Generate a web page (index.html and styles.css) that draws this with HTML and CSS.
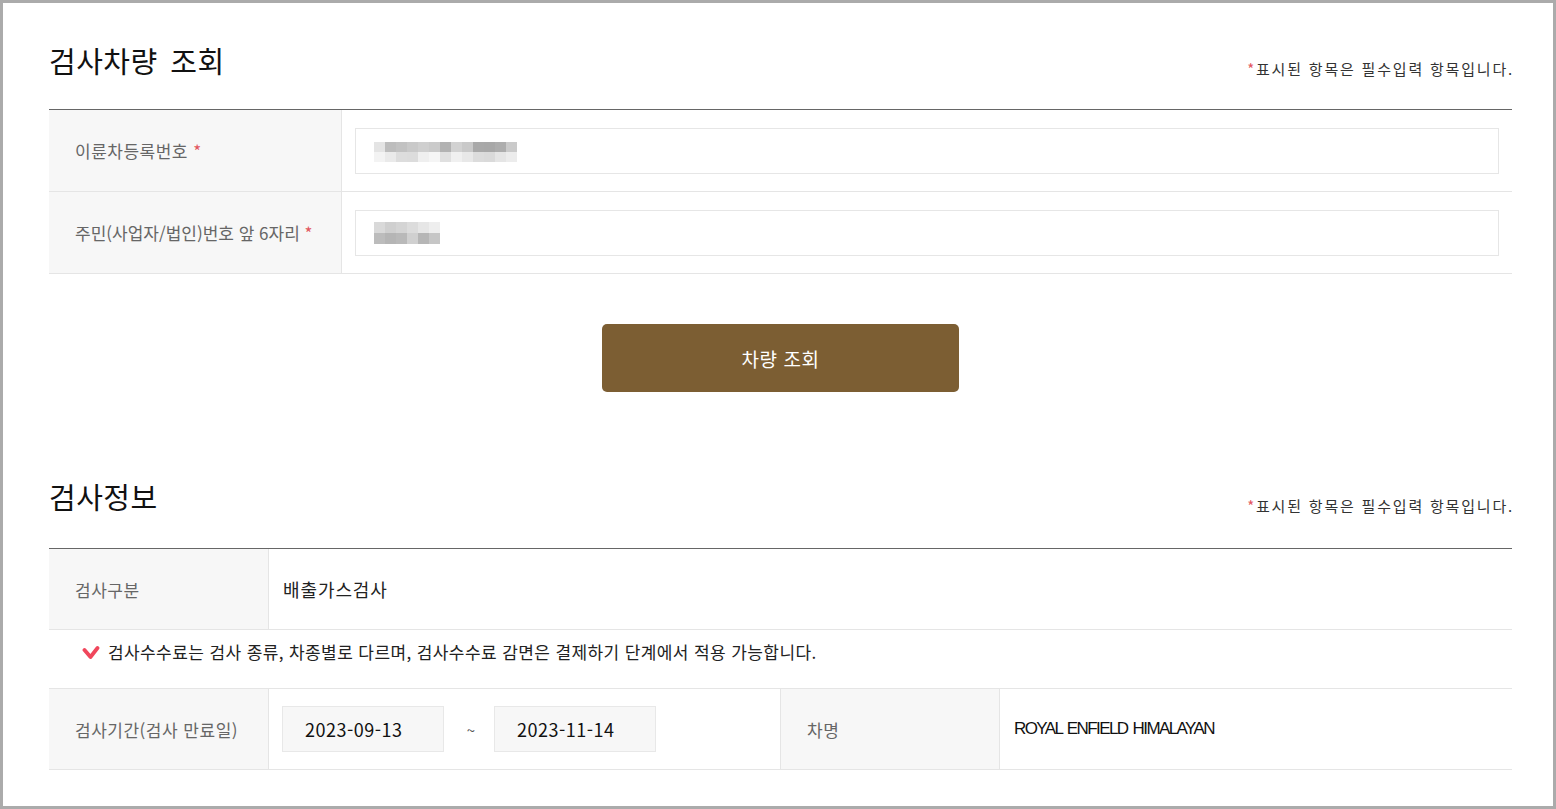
FILE: index.html
```html
<!DOCTYPE html>
<html lang="ko">
<head>
<meta charset="utf-8">
<title>검사차량 조회</title>
<link rel="stylesheet" href="styles.css">
</head>
<body>
<div class="frame">
  <section class="sec">
    <div class="sec-head">
      <h2 class="sec-title">검사차량 조회</h2>
      <p class="req-note"><span class="star">*</span>표시된 항목은 필수입력 항목입니다.</p>
    </div>
    <div class="form-table">
      <div class="row">
        <div class="th">이륜차등록번호&nbsp;<span class="star">*</span></div>
        <div class="td">
          <div class="input">
            <div class="mosaic mosaic-a"><div class="m-top"></div><div class="m-bot"></div></div>
          </div>
        </div>
      </div>
      <div class="row">
        <div class="th th-tight">주민(사업자/법인)번호 앞 6자리&nbsp;<span class="star">*</span></div>
        <div class="td">
          <div class="input">
            <div class="mosaic mosaic-b"><div class="m-top"></div><div class="m-bot"></div></div>
          </div>
        </div>
      </div>
    </div>
    <div class="btn-wrap"><button class="btn" type="button">차량 조회</button></div>
  </section>

  <section class="sec sec-info">
    <div class="sec-head sec-head-info">
      <h2 class="sec-title">검사정보</h2>
      <p class="req-note"><span class="star">*</span>표시된 항목은 필수입력 항목입니다.</p>
    </div>
    <div class="info-table">
      <div class="info-row">
        <div class="ith">검사구분</div>
        <div class="itd itd-span">배출가스검사</div>
      </div>
      <div class="notice-row">
        <svg class="check" viewBox="0 0 18 15" width="18" height="15" aria-hidden="true">
          <polyline points="2.5,5 8.5,12 15.5,3" fill="none" stroke="#f0475c" stroke-width="3.8" stroke-linecap="round" stroke-linejoin="round"/>
        </svg>
        <span>검사수수료는 검사 종류, 차종별로 다르며, 검사수수료 감면은 결제하기 단계에서 적용 가능합니다.</span>
      </div>
      <div class="info-row">
        <div class="ith th-tight">검사기간(검사 만료일)</div>
        <div class="itd itd-dates">
          <div class="date-box">2023-09-13</div>
          <span class="tilde">~</span>
          <div class="date-box">2023-11-14</div>
        </div>
        <div class="ith">차명</div>
        <div class="itd itd-name">ROYAL ENFIELD HIMALAYAN</div>
      </div>
    </div>
  </section>
</div>
</body>
</html>
```

FILE: styles.css
```css
* {
  box-sizing: border-box;
  margin: 0;
  padding: 0;
}

html, body {
  width: 1556px;
  height: 809px;
  overflow: hidden;
  background: #fff;
}

body {
  font-family: "Noto Sans CJK KR", "Noto Sans", sans-serif;
  color: #222;
}

.frame {
  height: 809px;
  border: 3px solid #ababab;
  padding: 0 41px 0 46px;
}

.sec-head {
  display: flex;
  justify-content: space-between;
  align-items: flex-start;
  height: 106px;
}

.sec-title {
  font-size: 29px;
  font-weight: 400;
  line-height: 40px;
  margin-top: 37px;
  color: #111;
  letter-spacing: 0.5px;
  word-spacing: 4px;
}

.req-note {
  font-size: 15px;
  line-height: 20px;
  margin-top: 56px;
  color: #333;
  letter-spacing: 1.8px;
  margin-right: -2px;
}

.star {
  color: #e2575f;
}

.form-table {
  border-top: 1px solid #666;
}

.row {
  display: flex;
  height: 82px;
  border-bottom: 1px solid #e5e5e5;
}

.th {
  width: 293px;
  flex: none;
  background: #f7f7f7;
  border-right: 1px solid #e5e5e5;
  padding-left: 26px;
  display: flex;
  align-items: center;
  font-size: 17px;
  letter-spacing: 0.5px;
  color: #666;
}

.th-tight {
  letter-spacing: 0;
}

.td {
  flex: 1;
  display: flex;
  align-items: center;
  padding: 0 13px;
}

.input {
  width: 100%;
  height: 46px;
  border: 1px solid #e6e6e6;
  padding: 3px 0 0 18px;
  display: flex;
  align-items: center;
}

.mosaic {
  display: flex;
  flex-direction: column;
  filter: blur(0.6px);
}

.m-top, .m-bot {
  height: 10px;
}

.mosaic-a .m-top, .mosaic-a .m-bot {
  width: 143px;
}

.mosaic-a .m-top {
  background: linear-gradient(to right,
    #e4e4e4 0 11px, #bdbdbd 11px 22px, #c2c2c2 22px 33px, #c9c9c9 33px 44px,
    #cfcfcf 44px 55px, #cacaca 55px 66px, #b2b2b2 66px 77px, #d2d2d2 77px 88px,
    #c9c9c9 88px 99px, #a9a9a9 99px 110px, #a8a8a8 110px 121px, #adadad 121px 132px,
    #cacaca 132px 143px);
}

.mosaic-a .m-bot {
  background: linear-gradient(to right,
    #f3f3f3 0 11px, #eaeaea 11px 22px, #dddddd 22px 33px, #dcdcdc 33px 44px,
    #efefef 44px 55px, #f5f5f5 55px 66px, #e0e0e0 66px 77px, #f0f0f0 77px 88px,
    #e8e8e8 88px 99px, #dcdcdc 99px 110px, #dadada 110px 121px, #e5e5e5 121px 132px,
    #ececec 132px 143px);
}

.mosaic-b {
  margin-top: -2px;
}

.mosaic-b .m-top, .mosaic-b .m-bot {
  width: 66px;
  height: 11px;
}

.mosaic-b .m-top {
  background: linear-gradient(to right,
    #d9d9d9 0 11px, #cfcfcf 11px 22px, #d4d4d4 22px 33px, #dcdcdc 33px 44px,
    #e6e6e6 44px 55px, #eeeeee 55px 66px);
}

.mosaic-b .m-bot {
  background: linear-gradient(to right,
    #bcbcbc 0 11px, #b5b5b5 11px 22px, #b9b9b9 22px 33px, #d0d0d0 33px 44px,
    #b6b6b6 44px 55px, #c6c6c6 55px 66px);
}

.btn-wrap {
  display: flex;
  justify-content: center;
  padding-top: 50px;
}

.btn {
  width: 357px;
  height: 68px;
  border: none;
  border-radius: 5px;
  background: #7c5e33;
  color: #fff;
  font-family: "Noto Sans CJK KR", "Noto Sans", sans-serif;
  font-size: 19px;
  letter-spacing: 0.6px;
}

.sec-head-info {
  height: 156px;
}

.sec-head-info .sec-title {
  margin-top: 84px;
}

.sec-head-info .req-note {
  margin-top: 104px;
}

.info-table {
  border-top: 1px solid #666;
}

.info-row {
  display: grid;
  grid-template-columns: 220px 512px 219px 1fr;
  height: 81px;
  border-bottom: 1px solid #e5e5e5;
}

.ith {
  background: #f7f7f7;
  border-right: 1px solid #e5e5e5;
  padding-left: 26px;
  display: flex;
  align-items: center;
  font-size: 17px;
  letter-spacing: 0.5px;
  color: #666;
}

.itd {
  display: flex;
  align-items: center;
  padding-left: 13px;
  color: #222;
}

.itd-span {
  grid-column: 2 / 5;
  padding-left: 14px;
  font-size: 18px;
  letter-spacing: 0.9px;
}

.itd-dates {
  border-right: 1px solid #e5e5e5;
}

.date-box {
  width: 162px;
  height: 46px;
  background: #f7f7f7;
  border: 1px solid #e8e8e8;
  padding-left: 22px;
  display: flex;
  align-items: center;
  font-size: 18px;
  letter-spacing: 0.5px;
  color: #111;
}

.tilde {
  width: 50px;
  text-align: center;
  font-size: 15px;
  color: #555;
  padding-left: 4px;
}

.itd-name {
  padding-left: 14px;
  font-family: "Liberation Sans", sans-serif;
  font-size: 17px;
  letter-spacing: -1.6px;
  word-spacing: 2px;
  color: #111;
}

.notice-row {
  display: flex;
  align-items: flex-start;
  gap: 8px;
  height: 59px;
  padding: 10px 0 0 33px;
  border-bottom: 1px solid #e5e5e5;
  font-size: 17px;
  line-height: 24px;
  letter-spacing: 0.4px;
  color: #222;
}

.check {
  flex: none;
  margin-top: 5px;
}
```
